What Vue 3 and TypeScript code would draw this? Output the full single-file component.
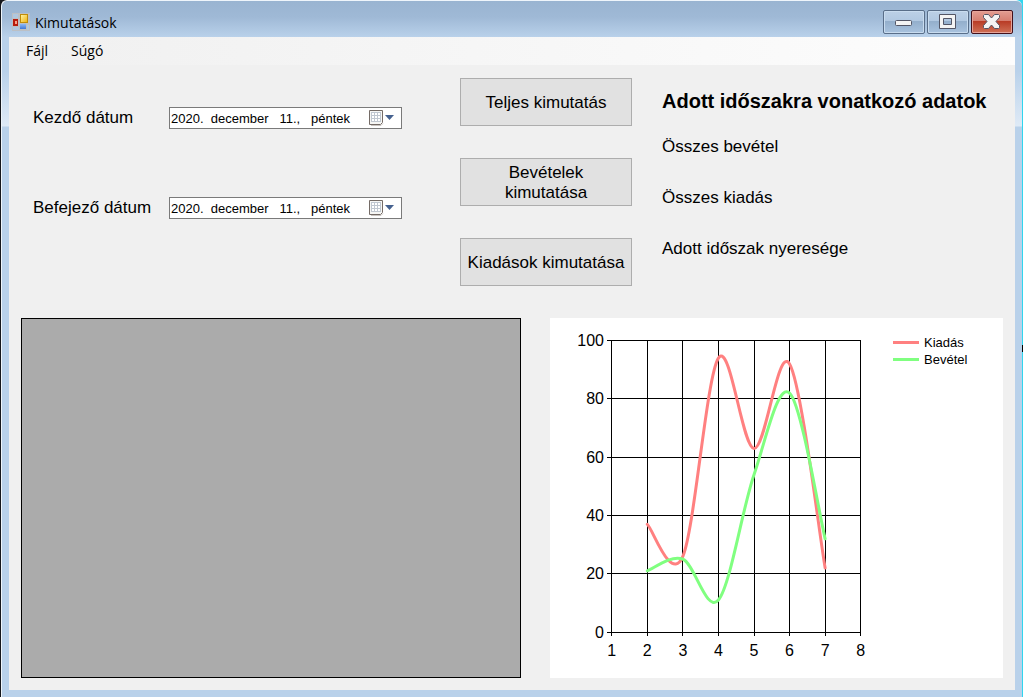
<script setup lang="ts">
import { ref } from 'vue'

interface Series {
  name: string
  color: string
  values: number[]
}

const startDate = ref('2020.  december   11.,   péntek')
const endDate = ref('2020.  december   11.,   péntek')

const xTicks = [1, 2, 3, 4, 5, 6, 7, 8]
const yTicks = [0, 20, 40, 60, 80, 100]
const series: Series[] = [
  { name: 'Kiadás', color: '#ff8080', values: [37, 26, 94, 63, 92, 22] },
  { name: 'Bevétel', color: '#80ff80', values: [21, 25, 11, 54, 82, 32] }
]

const xPos = (v: number): number => 61.72 + ((v - 1) * 249) / 7
const yPos = (v: number): number => 314.1 - v * 2.915
const crisp = (v: number): number => Math.floor(v) + 0.5

// Cardinal spline through the points, x starting at 2
function spline(values: number[]): string {
  const k = 1 / 6
  const p = values.map((v, i) => ({ x: xPos(i + 2), y: yPos(v) }))
  const last = p.length - 1
  const tangent = (i: number) => {
    const a = p[Math.max(0, i - 1)]
    const b = p[Math.min(last, i + 1)]
    return { x: (b.x - a.x) * k, y: (b.y - a.y) * k }
  }
  let d = `M${p[0].x} ${p[0].y}`
  for (let i = 0; i < last; i++) {
    const s = tangent(i)
    const e = tangent(i + 1)
    d += `C${p[i].x + s.x} ${p[i].y + s.y} ${p[i + 1].x - e.x} ${p[i + 1].y - e.y} ${p[i + 1].x} ${p[i + 1].y}`
  }
  return d
}
</script>

<template>
  <div class="desktop">
    <div class="window">
      <header class="titlebar">
        <svg class="app-icon" width="18" height="18" viewBox="0 0 18 18" aria-hidden="true">
          <defs>
            <linearGradient id="gold" x1="0" y1="0" x2="1" y2="1">
              <stop offset="0" stop-color="#fff3a0" /><stop offset="1" stop-color="#f0b414" />
            </linearGradient>
            <linearGradient id="sky" x1="0" y1="0" x2="0" y2="1">
              <stop offset="0" stop-color="#8db8f4" /><stop offset="1" stop-color="#3f78d8" />
            </linearGradient>
          </defs>
          <rect width="18" height="18" fill="#bcc0c5" />
          <path d="M1 1h5v4H1zM1 14h6v3H1zM15 12h2v5h-2z" fill="#b0c8e0" />
          <rect x="1" y="6" width="5" height="7" fill="#b81c0c" />
          <rect x="3" y="8" width="2" height="3" fill="#f8a088" />
          <rect x="8" y="1" width="8" height="9" fill="#c08c08" />
          <rect x="9" y="2" width="6" height="7" fill="url(#gold)" />
          <rect x="8" y="11" width="6" height="5" fill="url(#sky)" />
        </svg>
        <h1 class="title">Kimutatások</h1>
        <div class="window-buttons">
          <button class="winbtn" type="button" aria-label="Kis méret">
            <svg width="40" height="22" viewBox="1 1 40 22">
              <rect x="12.5" y="10.5" width="16" height="5" rx="1" fill="#f4f4f4" stroke="#535666" />
            </svg>
          </button>
          <button class="winbtn" type="button" aria-label="Teljes méret">
            <svg width="40" height="22" viewBox="1 1 40 22">
              <path d="M12.5 4.500h16v14h-16zM16.500 8.500v6h8v-6z" fill="#f4f4f4" fill-rule="evenodd" stroke="#535666" />
            </svg>
          </button>
          <button class="winbtn close" type="button" aria-label="Bezárás">
            <svg width="40" height="22" viewBox="1 1 40 22">
              <path d="M13.500 4.500h4l3 3.500 3-3.500h4l1 1v2l-3.500 4 3.500 4v2l-1 1h-4l-3-3.500-3 3.500h-4l-1-1v-2l3.500-4-3.500-4v-2z" fill="#f4f4f4" stroke="#535666" />
            </svg>
          </button>
        </div>
      </header>

      <main class="client">
        <nav class="menu">
          <button type="button">Fájl</button>
          <button type="button">Súgó</button>
        </nav>

        <div class="body">
          <section class="controls">
            <form class="dates" @submit.prevent>
              <div class="date-row">
                <label for="start">Kezdő dátum</label>
                <div class="picker">
                  <input id="start" v-model="startDate" type="text" />
                  <button type="button" aria-label="Kezdő dátum naptára">
                    <svg width="28" height="18" viewBox="0 0 28 18">
                      <path d="M3 16.500h10l2-2" fill="none" stroke="#c8c4c0" />
                      <path d="M1.500 1.500h13v12l-2 2h-11z" fill="#f6f6f4" stroke="#746b66" />
                      <path d="M3 3h10v10H3z" fill="#c0c7d0" />
                      <path d="M4 4h2v2H4zM7 4h2v2H7zM10 4h2v2h-2zM4 7h2v2H4zM7 7h2v2H7zM10 7h2v2h-2zM4 10h2v2H4zM7 10h2v2H7zM10 10h2v2h-2z" fill="#fff" />
                      <path d="M17 6h9l-4.500 5z" fill="#45618f" />
                    </svg>
                  </button>
                </div>
              </div>
              <div class="date-row">
                <label for="end">Befejező dátum</label>
                <div class="picker">
                  <input id="end" v-model="endDate" type="text" />
                  <button type="button" aria-label="Befejező dátum naptára">
                    <svg width="28" height="18" viewBox="0 0 28 18">
                      <path d="M3 16.500h10l2-2" fill="none" stroke="#c8c4c0" />
                      <path d="M1.500 1.500h13v12l-2 2h-11z" fill="#f6f6f4" stroke="#746b66" />
                      <path d="M3 3h10v10H3z" fill="#c0c7d0" />
                      <path d="M4 4h2v2H4zM7 4h2v2H7zM10 4h2v2h-2zM4 7h2v2H4zM7 7h2v2H7zM10 7h2v2h-2zM4 10h2v2H4zM7 10h2v2H7zM10 10h2v2h-2z" fill="#fff" />
                      <path d="M17 6h9l-4.500 5z" fill="#45618f" />
                    </svg>
                  </button>
                </div>
              </div>
            </form>

            <div class="actions">
              <button type="button">Teljes kimutatás</button>
              <button type="button">Bevételek kimutatása</button>
              <button type="button">Kiadások kimutatása</button>
            </div>

            <div class="summary">
              <h2>Adott időszakra vonatkozó adatok</h2>
              <p>Összes bevétel</p>
              <p>Összes kiadás</p>
              <p>Adott időszak nyeresége</p>
            </div>
          </section>

          <section class="panels">
            <div class="grid-view" role="region" aria-label="Tételek"></div>
            <div class="chart">
              <svg viewBox="0 0 453 360" preserveAspectRatio="xMidYMid meet" role="img" aria-label="Kiadás és bevétel">
                <g stroke="#000">
                  <line v-for="t in xTicks" :key="'x' + t" :x1="crisp(xPos(t))" :x2="crisp(xPos(t))" y1="22" y2="318" />
                  <line v-for="t in yTicks" :key="'y' + t" x1="57" x2="311" :y1="crisp(yPos(t))" :y2="crisp(yPos(t))" />
                </g>
                <g class="axis">
                  <text v-for="t in yTicks" :key="'ly' + t" x="54" :y="crisp(yPos(t)) + 5" text-anchor="end">{{ t }}</text>
                  <text v-for="t in xTicks" :key="'lx' + t" :x="xPos(t)" y="338" text-anchor="middle">{{ t }}</text>
                </g>
                <path v-for="s in series" :key="s.name" :d="spline(s.values)" :stroke="s.color" stroke-width="3" stroke-linecap="round" fill="none" />
                <g v-for="(s, i) in series" :key="'k' + s.name" class="legend">
                  <line x1="343" x2="369" :y1="24.5 + i * 17" :y2="24.5 + i * 17" :stroke="s.color" stroke-width="3" />
                  <text x="374" :y="29 + i * 17">{{ s.name }}</text>
                </g>
              </svg>
            </div>
          </section>
        </div>
      </main>
    </div>
    <span class="edge-mark"></span>
  </div>
</template>

<style>
body {
  margin: 0;
}
</style>

<style scoped>
* {
  box-sizing: border-box;
}
.desktop {
  min-height: 100vh;
  display: flex;
  background: linear-gradient(90deg, #15171c 50%, #30d5ee 50%);
  font-family: "Liberation Sans", Arial, sans-serif;
  font-size: 17px;
  color: #000;
}
.edge-mark {
  width: 1px;
  height: 7px;
  align-self: center;
  background: #000;
}
.window {
  flex: 1;
  display: flex;
  flex-direction: column;
  margin-left: 1px;
  padding: 0 7px 7px;
  border: solid #eef5fb;
  border-width: 1px 0 0 1px;
  border-radius: 6px 6px 0 0;
  background: linear-gradient(180deg, #99b4d1 0, #9fb9d6 16px, #b9d1ea 36px, #b9d1ea 70px, #dfeaf6 125px, #b9d1ea 126px);
}
.titlebar {
  height: 36px;
  display: flex;
  align-items: flex-start;
  padding: 0 2px 0 3px;
}
.app-icon {
  margin-top: 12px;
}
.title {
  margin: 11px 0 0 5px;
  font: 14px/22px "Open Sans", "Noto Sans", sans-serif;
}
.window-buttons {
  display: flex;
  gap: 2px;
  margin: 9px 0 0 auto;
}
.winbtn {
  width: 42px;
  height: 24px;
  padding: 0;
  display: grid;
  place-items: center;
  border: 1px solid #596e89;
  border-radius: 2px;
  box-shadow: inset 0 0 0 1px #c9dcef;
  background: linear-gradient(180deg, #bcd0e6 0, #b1c8e1 10px, #93aecb 10px, #a9c3df 100%);
}
.winbtn.close {
  border-color: #43101a;
  box-shadow: inset 0 0 0 1px #e6a499;
  background: linear-gradient(180deg, #e39d92 0, #d67e70 10px, #b83a24 10px, #cf7157 100%);
}
.client {
  flex: 1;
  display: flex;
  flex-direction: column;
  background: #f0f0f0;
}
.menu {
  height: 28px;
  display: flex;
  align-items: center;
  padding: 0 0 0 11px;
  background: linear-gradient(90deg, #f0f0f0, #fdfdfd);
}
.menu button {
  border: 0;
  padding: 0 6px;
  margin-right: 11px;
  background: none;
  font: 14px/22px "Open Sans", "Noto Sans", sans-serif;
}
.body {
  flex: 1;
  display: flex;
  flex-direction: column;
  padding: 13px 12px 12px;
}
.controls {
  display: flex;
  height: 240px;
}
.dates {
  width: 439px;
  padding: 29px 0 0 12px;
}
.date-row {
  display: flex;
  align-items: center;
  height: 22px;
  margin-bottom: 68px;
}
.date-row label {
  width: 136px;
}
.picker {
  display: flex;
  align-items: center;
  width: 233px;
  height: 22px;
  border: 1px solid #7a7a7a;
  background: #fff;
}
.picker input {
  flex: 1;
  min-width: 0;
  border: 0;
  padding: 1px 0 0 1px;
  background: none;
  font: 13px/19px "Liberation Sans", Arial, sans-serif;
}
.picker button {
  border: 0;
  padding: 0;
  margin-right: 5px;
  background: none;
  display: flex;
}
.actions {
  width: 172px;
  display: flex;
  flex-direction: column;
  gap: 32px;
}
.actions button {
  height: 48px;
  padding: 1px 6px 0;
  border: 1px solid #adadad;
  background: #e1e1e1;
  font: 17px/20px "Liberation Sans", Arial, sans-serif;
}
.summary {
  padding: 10px 0 0 30px;
}
.summary h2 {
  margin: 0 0 22px;
  font-size: 20px;
  line-height: 26px;
  white-space: nowrap;
}
.summary p {
  margin: 0 0 30px;
  line-height: 21px;
}
.panels {
  flex: 1;
  display: grid;
  grid-template-columns: 500fr 453fr;
  gap: 29px;
}
.grid-view {
  border: 1px solid #000;
  background: #ababab;
}
.chart {
  background: #fff;
  min-height: 360px;
}
.chart svg {
  display: block;
  width: 100%;
  height: 100%;
}
.axis text {
  font-size: 16px;
}
.legend text {
  font-size: 13px;
}
</style>
